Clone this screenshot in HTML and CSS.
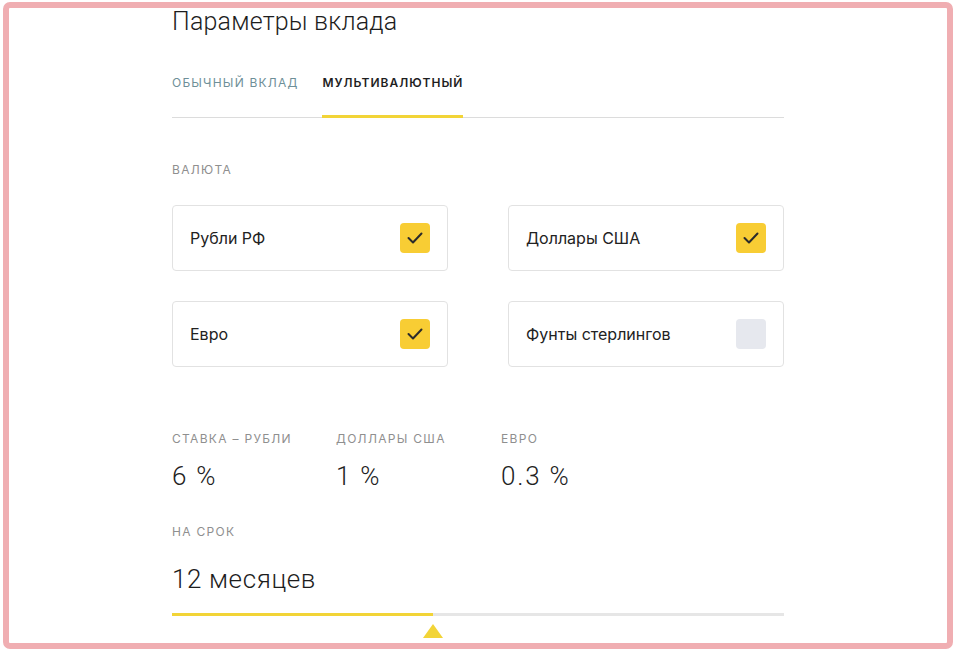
FILE: index.html
```html
<!DOCTYPE html>
<html lang="ru">
<head>
<meta charset="utf-8">
<link rel="stylesheet" href="styles.css">
</head>
<body>
<div class="frame">
  <div class="content">
    <h1 class="title">Параметры вклада</h1>
    <div class="tabs">
      <div class="tab">Обычный вклад</div>
      <div class="tab tab-active">Мультивалютный</div>
    </div>
    <div class="label label-currency">Валюта</div>
    <div class="cards">
      <div class="card"><span class="card-text">Рубли РФ</span><span class="check on"><svg viewBox="0 0 30 30" width="30" height="30"><path d="M8.5 15 L13 19.5 L21.5 10.5" fill="none" stroke="#2b2b2b" stroke-width="2" stroke-linecap="round" stroke-linejoin="round"/></svg></span></div>
      <div class="card"><span class="card-text">Доллары США</span><span class="check on"><svg viewBox="0 0 30 30" width="30" height="30"><path d="M8.5 15 L13 19.5 L21.5 10.5" fill="none" stroke="#2b2b2b" stroke-width="2" stroke-linecap="round" stroke-linejoin="round"/></svg></span></div>
      <div class="card"><span class="card-text">Евро</span><span class="check on"><svg viewBox="0 0 30 30" width="30" height="30"><path d="M8.5 15 L13 19.5 L21.5 10.5" fill="none" stroke="#2b2b2b" stroke-width="2" stroke-linecap="round" stroke-linejoin="round"/></svg></span></div>
      <div class="card"><span class="card-text">Фунты стерлингов</span><span class="check off"></span></div>
    </div>
    <div class="rates">
      <div class="rate">
        <div class="label">Ставка – рубли</div>
        <div class="value">6 %</div>
      </div>
      <div class="rate">
        <div class="label">Доллары США</div>
        <div class="value">1 %</div>
      </div>
      <div class="rate">
        <div class="label">Евро</div>
        <div class="value">0.3 %</div>
      </div>
    </div>
    <div class="label label-term">На срок</div>
    <div class="term">12 месяцев</div>
    <div class="slider">
      <div class="track"><div class="fill" style="width: 42.6%"></div></div>
      <div class="thumb-row" style="padding-left: 42.6%"><span class="thumb"></span></div>
    </div>
  </div>
</div>
</body>
</html>
```
FILE: styles.css
```css
* { box-sizing: border-box; }
html, body { margin: 0; padding: 0; background: #ffffff; }
body {
  width: 956px;
  height: 651px;
  overflow: hidden;
  font-family: Roboto, "Liberation Sans", sans-serif;
  color: #222;
}
.frame {
  margin: 2px 0 0 3px;
  width: 950px;
  height: 647px;
  border: 6px solid #f0aeb2;
  border-radius: 7px;
  overflow: hidden;
}
.content {
  margin-left: 163px;
  width: 612px;
}
.title {
  margin: 0;
  font-weight: 300;
  font-size: 25px;
  line-height: 28px;
  letter-spacing: 0.2px;
  color: #1d1d1d;
}
.tabs {
  margin-top: 38px;
  display: flex;
  gap: 24px;
  border-bottom: 1px solid #dcdcdc;
}
.tab {
  font-family: Inter, Roboto, sans-serif;
  font-size: 12px;
  line-height: 16px;
  letter-spacing: 1.2px;
  text-transform: uppercase;
  color: #6e8f98;
  padding-top: 1px;
  padding-bottom: 24px;
  border-bottom: 3px solid transparent;
  margin-bottom: -1px;
}
.tab-active {
  color: #1f1f1f;
  font-weight: 600;
  letter-spacing: 1px;
  border-bottom-color: #f2d437;
}
.label {
  font-family: Inter, Roboto, sans-serif;
  font-size: 12px;
  line-height: 16px;
  letter-spacing: 1.3px;
  text-transform: uppercase;
  color: #8f8f8f;
}
.label-currency { margin-top: 44px; }
.cards {
  margin-top: 27px;
  display: grid;
  grid-template-columns: 276px 276px;
  column-gap: 60px;
  row-gap: 30px;
}
.card {
  height: 66px;
  border: 1px solid #e2e2e2;
  border-radius: 4px;
  display: flex;
  align-items: center;
  justify-content: space-between;
  padding: 0 17px 1px 17px;
}
.card-text {
  font-family: Inter, Roboto, sans-serif;
  font-size: 16px;
  color: #222;
}
.check {
  width: 30px;
  height: 30px;
  border-radius: 4px;
  display: block;
}
.check svg { display: block; }
.check.on { background: #f8cd34; }
.check.off { background: #e6e8ee; }
.rates {
  margin-top: 64px;
  display: grid;
  grid-template-columns: 164px 165px 164px;
}
.value {
  margin-top: 15px;
  font-weight: 300;
  font-size: 26px;
  line-height: 28px;
  letter-spacing: 1.8px;
  color: #222;
}
.label-term { margin-top: 34px; }
.term {
  margin-top: 23px;
  font-weight: 300;
  font-size: 26px;
  line-height: 33px;
  letter-spacing: 0.6px;
  color: #1d1d1d;
}
.slider { margin-top: 17px; }
.track {
  height: 3px;
  background: #e6e6e6;
}
.fill {
  height: 3px;
  background: #f2d437;
}
.thumb-row {
  margin-top: 8px;
  margin-left: -10px;
  height: 14px;
}
.thumb {
  display: block;
  width: 0;
  height: 0;
  border-left: 10px solid transparent;
  border-right: 10px solid transparent;
  border-bottom: 14px solid #f2d437;
}
```
